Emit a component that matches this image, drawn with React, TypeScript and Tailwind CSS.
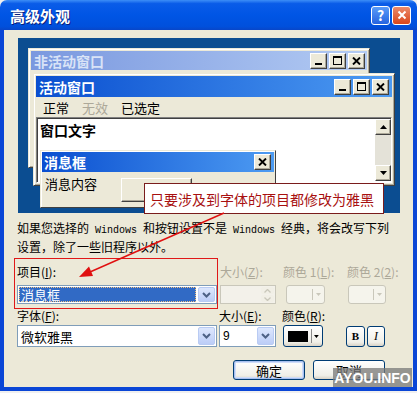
import type { ReactNode } from "react";

const raised =
  "border border-t-white border-l-white border-r-[#404040] border-b-[#404040] bg-[#ECE9D8] shadow-[inset_-1px_-1px_0_#aca899]";

function CapBtn({ kind }: { kind: "min" | "max" | "close" }) {
  return (
    <div className={`flex h-4 w-[17px] items-center justify-center ${raised}`}>
      {kind === "min" && <div className="mt-[7px] h-[2px] w-[7px] bg-black" />}
      {kind === "max" && <div className="h-[9px] w-[9px] border border-t-2 border-black" />}
      {kind === "close" && (
        <svg width="9" height="8" viewBox="0 0 9 8">
          <path d="M1 0.5L8 7.5M8 0.5L1 7.5" stroke="black" strokeWidth="1.9" />
        </svg>
      )}
    </div>
  );
}

function ScrollBtn({ up }: { up?: boolean }) {
  return (
    <div className={`flex h-4 w-4 items-center justify-center ${raised}`}>
      <svg width="7" height="4" viewBox="0 0 7 4">
        <path d={up ? "M0 4L3.5 0L7 4Z" : "M0 0L3.5 4L7 0Z"} fill="black" />
      </svg>
    </div>
  );
}

function DropBtn({ tall }: { tall?: boolean }) {
  return (
    <div
      className={`flex w-[17px] items-center justify-center rounded-[2px] border border-[#b9cbf3] bg-[linear-gradient(180deg,#dde7fd,#bccdf7)] ${tall ? "h-[18px]" : "h-[15px]"}`}
    >
      <svg width="9" height="6" viewBox="0 0 9 6">
        <path d="M1 1L4.5 4.5L8 1" stroke="#4d6185" strokeWidth="2" fill="none" />
      </svg>
    </div>
  );
}

function Mono({ children }: { children: ReactNode }) {
  return <span className="font-['Liberation_Mono',monospace] text-[10px]">{children}</span>;
}

function Label({ text, k, dim, className = "" }: { text: string; k: string; dim?: boolean; className?: string }) {
  return (
    <div className={`h-[14px] text-[12px] leading-[14px] ${dim ? "text-[#aca899]" : "text-black"} ${className}`}>
      {text}(<span className="underline">{k}</span>):
    </div>
  );
}

function XpButton({ children, def }: { children: ReactNode; def?: boolean }) {
  return (
    <div
      className={`flex h-5 items-center justify-center rounded-[3px] border border-[#003c74] bg-[linear-gradient(180deg,#ffffff,#f0efe8_80%,#d8d2c6)] text-[13px] leading-none text-black ${def ? "shadow-[inset_0_0_0_1px_#a8c0f0,inset_0_0_0_2px_#cfdcf8]" : ""}`}
    >
      {children}
    </div>
  );
}

export default function App() {
  return (
    <div className="relative h-[393px] w-[417px] overflow-hidden bg-[#f0f0f0] font-['Noto_Sans_CJK_SC',sans-serif]">
      <div className="flex h-[391px] w-[417px] flex-col">
        {/* caption */}
        <div className="flex h-[30px] shrink-0 items-center rounded-t-[7px] bg-[linear-gradient(180deg,#3d8ef7_0%,#0a5ce8_12%,#0055e5_50%,#0050dc_88%,#0846c8_100%)] pl-[10px] pr-[6px]">
          <span className="text-[15px] font-bold leading-none text-white [text-shadow:1px_1px_#0a1f7a]">高级外观</span>
          <div className="ml-auto flex gap-[2px]">
            <div className="flex h-[19px] w-[19px] items-center justify-center rounded-[3px] border border-white bg-[linear-gradient(180deg,#5a9cf8,#2663e0)] text-[14px] font-bold leading-none text-white">
              ?
            </div>
            <div className="flex h-[19px] w-[19px] items-center justify-center rounded-[3px] border border-white bg-[linear-gradient(180deg,#ec8a6a,#d9461b)]">
              <svg width="10" height="10" viewBox="0 0 10 10">
                <path d="M1.5 1.5L8.5 8.5M8.5 1.5L1.5 8.5" stroke="white" strokeWidth="2" />
              </svg>
            </div>
          </div>
        </div>

        {/* body */}
        <div className="flex flex-1 flex-col border-x-4 border-b-4 border-[#0a46d6] bg-[#ECE9D8] pl-[13px] pt-[8px]">
          {/* preview */}
          <div className="relative ml-px h-[175px] w-[382px] overflow-hidden bg-[#0b4d91]">
            {/* inactive window */}
            <div className="absolute left-[10px] top-[10px] h-[120px] w-[342px] border border-t-[#ECE9D8] border-l-[#ECE9D8] border-r-[#404040] border-b-[#404040] bg-[#ECE9D8] p-[2px] shadow-[inset_1px_1px_0_white,inset_-1px_-1px_0_#aca899]">
              <div className="flex h-[19px] items-center bg-[linear-gradient(90deg,#7a98df,#b3cbf3)] pl-[3px] pr-[2px]">
                <span className="text-[14px] font-bold leading-none text-[#d9e3f7]">非活动窗口</span>
                <div className="ml-auto flex gap-[2px]">
                  <CapBtn kind="min" />
                  <CapBtn kind="max" />
                  <CapBtn kind="close" />
                </div>
              </div>
            </div>

            {/* active window */}
            <div className="absolute left-[15px] top-[35px] flex h-[113px] w-[362px] flex-col border border-t-[#ECE9D8] border-l-[#ECE9D8] border-r-[#404040] border-b-[#404040] bg-[#ECE9D8] p-[2px] shadow-[inset_1px_1px_0_white,inset_-1px_-1px_0_#aca899]">
              <div className="flex h-[21px] shrink-0 items-center bg-[linear-gradient(90deg,#0a4fd0,#4d9bf2)] pl-[3px] pr-[3px]">
                <span className="text-[14px] font-bold leading-none text-white">活动窗口</span>
                <div className="ml-auto flex gap-[2px]">
                  <CapBtn kind="min" />
                  <CapBtn kind="max" />
                  <CapBtn kind="close" />
                </div>
              </div>
              <div className="flex h-5 shrink-0 items-center gap-[13px] pl-[7px] text-[13px] leading-none">
                <span className="text-black">正常</span>
                <span className="text-[#aca899]">无效</span>
                <span className="text-black">已选定</span>
              </div>
              <div className="flex h-[66px] shrink-0 border border-t-[#808080] border-l-[#808080] border-r-white border-b-white bg-white shadow-[inset_1px_1px_0_#404040]">
                <div className="flex-1 pl-[3px] pt-[5px] text-[14px] font-bold leading-none text-black">窗口文字</div>
                <div className="flex w-4 flex-col pb-px pt-px">
                  <ScrollBtn up />
                  <div className="flex-1 bg-[#e4e2d8]" />
                  <ScrollBtn />
                </div>
              </div>
            </div>

            {/* message box */}
            <div className="absolute left-[22px] top-[112px] flex h-[58px] w-[236px] flex-col border border-t-[#ECE9D8] border-l-[#ECE9D8] border-r-[#404040] border-b-[#404040] bg-[#ECE9D8] p-px shadow-[inset_1px_1px_0_white]">
              <div className="flex h-5 shrink-0 items-center bg-[linear-gradient(90deg,#0a4fd0,#4d9bf2)] pl-[2px] pr-[3px]">
                <span className="text-[14px] font-bold leading-none text-white">消息框</span>
                <div className="ml-auto">
                  <CapBtn kind="close" />
                </div>
              </div>
              <div className="flex items-start pl-[3px]">
                <span className="mt-[5px] text-[13px] leading-none text-black">消息内容</span>
                <div className={`ml-[24px] mt-[6px] h-6 w-[71px] ${raised}`} />
              </div>
            </div>
          </div>

          {/* description */}
          <div className="mt-[7px] whitespace-nowrap text-[12px] leading-[16px] text-black">
            如果您选择的<Mono> Windows </Mono>和按钮设置不是<Mono> Windows </Mono>经典，将会改写下列
            <br />
            设置，除了一些旧程序以外。
          </div>

          {/* row 1 labels */}
          <div className="mt-[10px] flex">
            <Label text="项目" k="I" className="w-[200px]" />
            <Label text="大小" k="Z" dim className="ml-[3px] w-[63px]" />
            <Label text="颜色 1" k="L" dim className="w-[64px]" />
            <Label text="颜色 2" k="2" dim />
          </div>

          {/* row 1 controls */}
          <div className="mt-[6px] flex h-[19px] items-center">
            <div className="flex h-[19px] w-[200px] items-center border border-[#7f9db9] bg-white p-px">
              <div className="flex h-full flex-1 items-center border border-dotted border-[#f0c080] bg-[#316ac5] pl-px text-[13px] leading-none text-white">
                消息框
              </div>
              <div className="ml-[2px]">
                <DropBtn />
              </div>
            </div>
            <div className="ml-[3px] flex h-[19px] w-[56px] border border-[#c9c7ba] bg-[#f3f1ea]">
              <div className="flex-1" />
              <div className="flex w-[15px] flex-col gap-px p-px">
                <div className="flex flex-1 items-center justify-center rounded-[2px] bg-[#f1efe6]">
                  <svg width="7" height="4" viewBox="0 0 7 4"><path d="M0.5 3.5L3.5 0.5L6.5 3.5" stroke="#c9c7ba" fill="none" strokeWidth="1.3" /></svg>
                </div>
                <div className="flex flex-1 items-center justify-center rounded-[2px] bg-[#f1efe6]">
                  <svg width="7" height="4" viewBox="0 0 7 4"><path d="M0.5 0.5L3.5 3.5L6.5 0.5" stroke="#c9c7ba" fill="none" strokeWidth="1.3" /></svg>
                </div>
              </div>
            </div>
            {[39, 38].map((w, i) => (
              <div
                key={i}
                className={`flex h-[19px] items-center justify-end rounded-[3px] border border-[#c9c7ba] bg-[#f5f4ec] pr-[3px] ${i === 0 ? "ml-[10px] w-[39px]" : "ml-[23px] w-[38px]"}`}
              >
                <div className="mr-[3px] h-[11px] w-px bg-[#c9c7ba]" />
                <svg width="5" height="3" viewBox="0 0 5 3"><path d="M0 0L2.5 3L5 0Z" fill="#c9c7ba" /></svg>
              </div>
            ))}
          </div>

          {/* row 2 labels */}
          <div className="mt-[5px] flex">
            <Label text="字体" k="F" className="w-[200px]" />
            <Label text="大小" k="E" className="ml-[2px] w-[63px]" />
            <Label text="颜色" k="R" />
          </div>

          {/* row 2 controls */}
          <div className="mt-[2px] flex h-[22px] items-center">
            <div className="flex h-[22px] w-[200px] items-center border border-[#7f9db9] bg-white py-px pl-[3px] pr-px">
              <span className="flex-1 text-[13px] leading-none text-black">微软雅黑</span>
              <DropBtn tall />
            </div>
            <div className="ml-[2px] flex h-[22px] w-[57px] items-center border border-[#7f9db9] bg-white py-px pl-[3px] pr-px">
              <span className="flex-1 font-['Liberation_Sans',sans-serif] text-[12px] leading-none text-black">9</span>
              <DropBtn tall />
            </div>
            <div className="ml-[7px] flex h-[22px] w-[40px] items-center rounded-[3px] border border-[#003c74] bg-[linear-gradient(180deg,#ffffff,#f0efe8_80%,#d8d2c6)] pl-[4px] pr-[3px]">
              <div className="h-[11px] w-[21px] bg-black" />
              <div className="ml-[3px] h-[14px] w-px bg-[#8a8a8a]" />
              <svg className="ml-[2px]" width="5" height="3" viewBox="0 0 5 3"><path d="M0 0L2.5 3L5 0Z" fill="black" /></svg>
            </div>
            <div className="ml-[23px] flex h-[21px] w-[19px] items-center justify-center rounded-[3px] border border-[#003c74] bg-[linear-gradient(180deg,#ffffff,#f0efe8_80%,#d8d2c6)] font-['Liberation_Serif',serif] text-[11px] font-bold leading-none text-black">
              B
            </div>
            <div className="ml-[2px] flex h-[21px] w-[18px] items-center justify-center rounded-[3px] border border-[#003c74] bg-[linear-gradient(180deg,#ffffff,#f0efe8_80%,#d8d2c6)] font-['Liberation_Serif',serif] text-[12px] italic leading-none text-black">
              I
            </div>
          </div>

          {/* dialog buttons */}
          <div className="mt-[13px] flex">
            <div className="ml-[216px] w-[72px]">
              <XpButton def>确定</XpButton>
            </div>
            <div className="ml-[8px] w-[72px]">
              <XpButton>取消</XpButton>
            </div>
          </div>
        </div>
      </div>

      {/* annotation */}
      <div className="absolute left-[144px] top-[183px] flex h-[31px] w-[240px] items-center border border-[#7a1c1c] bg-white pl-[5px] text-[14px] leading-none text-[#a81010]">
        只要涉及到字体的项目都修改为雅黑
      </div>
      <div className="absolute left-[14px] top-[258px] h-[51px] w-[204px] border border-[#e01818]" />
      <svg className="pointer-events-none absolute left-0 top-0" width="417" height="393">
        <line x1="224" y1="213" x2="90" y2="272" stroke="#e01010" strokeWidth="1.4" />
        <polygon points="79,277 93,276 89,266.5" fill="#e01010" />
      </svg>

      {/* watermark */}
      <div className="absolute left-[333px] top-[368px] flex h-[19px] w-[79px] items-center justify-center bg-[rgba(120,120,120,0.75)] font-['Liberation_Sans',sans-serif] text-[14px] font-bold leading-none text-white">
        AYOU.INFO
      </div>
    </div>
  );
}
